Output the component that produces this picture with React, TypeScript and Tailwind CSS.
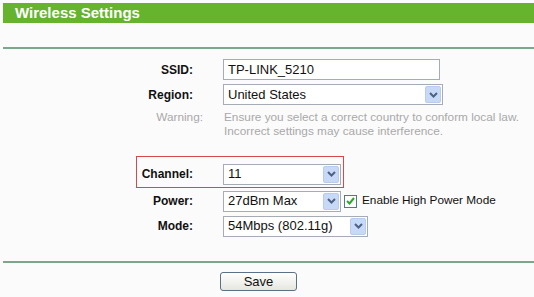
import React from "react";

const font = { fontFamily: '"Liberation Sans", Arial, sans-serif' };

function Arrow() {
  return (
    <div className="flex h-[17px] w-[16px] items-center justify-center rounded-[2px] border border-[#b9cbef] bg-[#c8d9f8]">
      <svg width="9" height="6" viewBox="0 0 9 6">
        <path d="M1 1 L4.5 4.5 L8 1" fill="none" stroke="#4d6185" strokeWidth="2" />
      </svg>
    </div>
  );
}

function Select({ value, w }: { value: string; w: string }) {
  return (
    <div className={`flex h-[21px] ${w} items-center justify-between border border-[#a5acb5] bg-white pl-[4px] pr-[1px]`}>
      <span className="text-[13px] text-[#111]">{value}</span>
      <Arrow />
    </div>
  );
}

function Label({ children }: { children: React.ReactNode }) {
  return <div className="w-[193px] shrink-0 text-right text-[12px] font-bold text-[#111]">{children}</div>;
}

export default function App() {
  return (
    <div className="h-[297px] w-[534px] overflow-hidden bg-[#fbfbfb]" style={font}>
      <div className="pl-[3px] pt-[3px]">
        <div className="flex h-[20px] items-center bg-[#66b32e] pl-[12px] text-[15px] font-bold text-white">
          Wireless Settings
        </div>
        <div className="mt-[24px] h-[2px] bg-[#7aa88c]" />
      </div>

      <div className="mt-[10px] flex flex-col">
        <div className="flex h-[21px] items-center">
          <Label>SSID:</Label>
          <div className="ml-[30px] flex h-[21px] w-[217px] items-center border border-[#a5acb5] bg-white pl-[4px] text-[13px] text-[#111]">
            TP-LINK_5210
          </div>
        </div>
        <div className="mt-[4px] flex h-[21px] items-center">
          <Label>Region:</Label>
          <div className="ml-[30px]">
            <Select value="United States" w="w-[220px]" />
          </div>
        </div>
        <div className="mt-[5px] flex items-start">
          <div className="w-[203px] shrink-0 text-right text-[11.8px] leading-[14px] text-[#a9a9a9]">Warning:</div>
          <div className="ml-[21px] text-[11.8px] leading-[14px] text-[#a9a9a9]">
            Ensure you select a correct country to conform local law.
            <br />
            Incorrect settings may cause interference.
          </div>
        </div>

        <div className="ml-[136px] mt-[18px] flex h-[32px] w-[208px] items-center border border-[#d9474e] pt-[4px]">
          <div className="w-[56px] shrink-0 text-right text-[12px] font-bold text-[#111]">Channel:</div>
          <div className="ml-[30px]">
            <Select value="11" w="w-[118px]" />
          </div>
        </div>

        <div className="mt-[2px] flex h-[22px] items-center">
          <Label>Power:</Label>
          <div className="ml-[30px] flex items-center">
            <Select value="27dBm Max" w="w-[118px]" />
            <div className="ml-[3px] flex h-[13px] w-[13px] items-center justify-center border border-[#4f7a8a] bg-white">
              <svg width="9" height="8" viewBox="0 0 9 8">
                <path d="M1 4 L3.5 6.5 L8 1" fill="none" stroke="#2ea52e" strokeWidth="2" />
              </svg>
            </div>
            <span className="ml-[5px] text-[11.8px] text-[#111]">Enable High Power Mode</span>
          </div>
        </div>

        <div className="mt-[3px] flex h-[22px] items-center">
          <Label>Mode:</Label>
          <div className="ml-[30px]">
            <Select value="54Mbps (802.11g)" w="w-[145px]" />
          </div>
        </div>
      </div>

      <div className="ml-[3px] mt-[24px] h-[2px] bg-[#7aa88c]" />

      <div className="mt-[9px] flex pl-[220px]">
        <button className="flex h-[19px] w-[77px] items-center justify-center rounded-[3px] border border-[#5a7186] bg-gradient-to-b from-[#ffffff] to-[#e6e6e0] text-[13px] text-[#111]">
          Save
        </button>
      </div>
    </div>
  );
}
